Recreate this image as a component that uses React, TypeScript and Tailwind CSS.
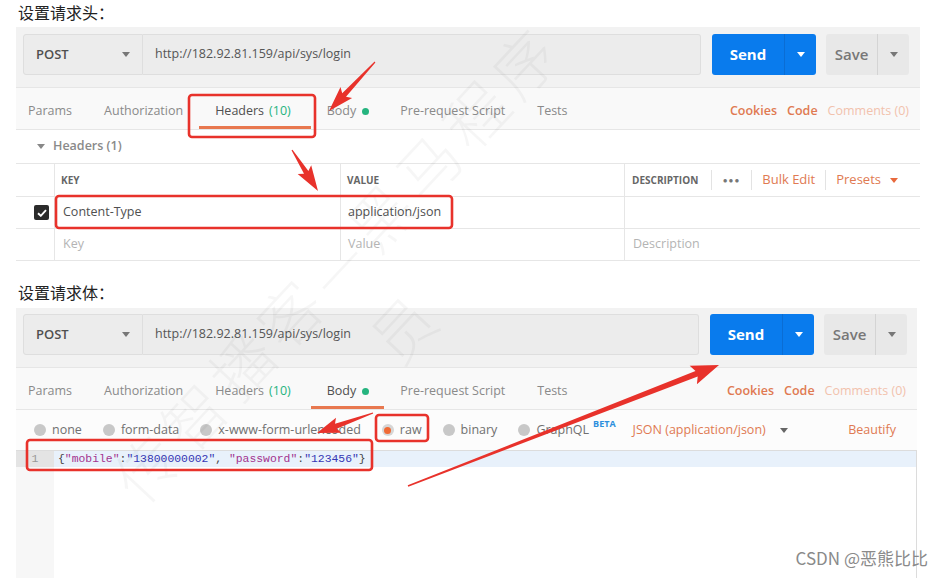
import React from 'react';

const RED = '#e8322b';

function Caret({ className = 'border-t-[#777]' }: { className?: string }) {
  return <span className={`inline-block h-0 w-0 border-x-[4px] border-t-[5px] border-x-transparent ${className}`} />;
}

function RequestBar() {
  return (
    <div className="flex h-[41px] items-stretch">
      <div className="flex w-[120px] items-center justify-between rounded-l-[3px] border border-[#dedede] bg-[#ececec] px-[12px]">
        <span className="text-[13px] font-semibold text-[#505050]">POST</span>
        <Caret />
      </div>
      <div className="flex flex-1 items-center rounded-r-[3px] border border-l-0 border-[#dedede] bg-[#ececec] pl-[12px] text-[12.5px] text-[#555]">
        http://182.92.81.159/api/sys/login
      </div>
      <div className="ml-[11px] flex w-[104px] rounded-[3px] bg-[#097bed]">
        <div className="flex w-[72px] items-center justify-center text-[15px] font-bold text-white">Send</div>
        <div className="flex flex-1 items-center justify-center border-l border-[#0a6dd4]">
          <Caret className="border-t-white" />
        </div>
      </div>
      <div className="ml-[10px] flex w-[83px] rounded-[3px] bg-[#e8e8e8]">
        <div className="flex w-[51px] items-center justify-center text-[15px] font-semibold text-[#777]">Save</div>
        <div className="flex flex-1 items-center justify-center border-l border-[#d4d4d4]">
          <Caret />
        </div>
      </div>
    </div>
  );
}

function Tabs({ active }: { active: 'headers' | 'body' }) {
  const tab = (on: boolean) =>
    `flex items-center px-[16px] border-b-[3px] pt-[8px] ${on ? 'border-[#e8784f] text-[#505050]' : 'border-transparent text-[#8a8a8a]'}`;
  return (
    <div className="flex h-[43px] items-stretch border-y border-[#e6e6e6] bg-[#f9f9f9] pr-[11px] text-[12.5px]">
      <div className={`${tab(false)} !pl-[12px]`}>Params</div>
      <div className={tab(false)}>Authorization</div>
      <div className={`${tab(active === 'headers')} !pr-[20px]`}>
        Headers<span className="ml-[5px] text-[#26b47f]">(10)</span>
      </div>
      <div className={`${tab(active === 'body')} !pr-[15px]`}>
        Body<span className="ml-[6px] inline-block h-[7px] w-[7px] rounded-full bg-[#26b47f]" />
      </div>
      <div className={tab(false)}>Pre-request Script</div>
      <div className={tab(false)}>Tests</div>
      <div className="ml-auto flex items-center gap-[10px] pt-[5px]">
        <span className="font-semibold text-[#e07a52]">Cookies</span>
        <span className="font-semibold text-[#e07a52]">Code</span>
        <span className="text-[#f2c2ad]">Comments (0)</span>
      </div>
    </div>
  );
}

function Radio({ label, on = false }: { label: string; on?: boolean }) {
  return (
    <div className="flex items-center gap-[6px]">
      {on ? (
        <span className="flex h-[12px] w-[12px] items-center justify-center rounded-full bg-[#d6d6d6]">
          <span className="h-[7px] w-[7px] rounded-full bg-[#f06a35]" />
        </span>
      ) : (
        <span className="h-[12px] w-[12px] rounded-full bg-[#c8c8c8]" />
      )}
      <span>{label}</span>
    </div>
  );
}

function arrow(x1: number, y1: number, x2: number, y2: number, head = 20, hw = 9, t0 = 0.6, t1 = 2.6) {
  const len = Math.hypot(x2 - x1, y2 - y1);
  const ux = (x2 - x1) / len;
  const uy = (y2 - y1) / len;
  const nx = -uy;
  const ny = ux;
  const bx = x2 - ux * head;
  const by = y2 - uy * head;
  const wx = x2 - ux * head * 1.15;
  const wy = y2 - uy * head * 1.15;
  const pts = [
    [x1 + nx * t0, y1 + ny * t0],
    [bx + nx * t1, by + ny * t1],
    [wx + nx * hw, wy + ny * hw],
    [x2, y2],
    [wx - nx * hw, wy - ny * hw],
    [bx - nx * t1, by - ny * t1],
    [x1 - nx * t0, y1 - ny * t0],
  ];
  return pts.map((p) => p.map((v) => v.toFixed(1)).join(',')).join(' ');
}

export default function App() {
  return (
    <div className="relative h-[578px] w-[944px] overflow-hidden bg-white font-['Open_Sans',sans-serif]">
      {/* 设置请求头 */}
      <div className="h-[27px] pl-[18px] font-['Noto_Sans_CJK_SC',sans-serif] text-[16px] leading-[25px] text-[#222]">设置请求头：</div>
      <div className="ml-[16px] w-[904px]">
        <div className="bg-[#f2f2f2] pt-[7px] pr-[11px] pb-[12px] pl-[7px]">
          <RequestBar />
        </div>
        <Tabs active="headers" />
        <div className="flex h-[33px] items-center pl-[21px] text-[12.5px] font-semibold text-[#8a8a8a]">
          <Caret className="border-t-[#888]" />
          <span className="ml-[8px]">Headers (1)</span>
        </div>
        <div className="grid grid-cols-[38px_286px_284px_1fr] border-t border-[#e6e6e6] text-[12.5px]">
          <div className="h-[33px] border-b border-[#e6e6e6]" />
          <div className="flex items-center border-b border-l border-[#e6e6e6] pl-[6px] text-[10px] font-bold text-[#666]">KEY</div>
          <div className="flex items-center border-b border-l border-[#e6e6e6] pl-[6px] text-[10px] font-bold text-[#666]">VALUE</div>
          <div className="flex items-center border-b border-l border-[#e6e6e6] pl-[7px]">
            <span className="text-[10px] font-bold text-[#666]">DESCRIPTION</span>
            <div className="ml-auto mr-[22px] flex h-[20px] items-center text-[13px]">
              <span className="h-full w-px bg-[#e3e3e3]" />
              <span className="px-[11px] text-[8px] tracking-[1px] text-[#777]">●●●</span>
              <span className="h-full w-px bg-[#e3e3e3]" />
              <span className="px-[10px] text-[#e07a52]">Bulk Edit</span>
              <span className="h-full w-px bg-[#e3e3e3]" />
              <span className="flex items-center gap-[9px] pl-[10px] text-[#e07a52]">
                Presets <Caret className="border-t-[#e8693c]" />
              </span>
            </div>
          </div>

          <div className="flex h-[32px] items-center border-b border-[#e6e6e6] pl-[18px]">
            <span className="flex h-[15px] w-[15px] items-center justify-center rounded-[2px] bg-[#2b2b2b]">
              <svg width="10" height="8" viewBox="0 0 10 8">
                <path d="M1 4.2 L3.8 6.8 L9 1.2" fill="none" stroke="white" strokeWidth="1.9" />
              </svg>
            </span>
          </div>
          <div className="flex items-center border-b border-l border-[#e6e6e6] pl-[8px] text-[#505050]">Content-Type</div>
          <div className="flex items-center border-b border-l border-[#e6e6e6] pl-[7px] text-[#505050]">application/json</div>
          <div className="border-b border-l border-[#e6e6e6]" />

          <div className="h-[32px] border-b border-[#e6e6e6]" />
          <div className="flex items-center border-b border-l border-[#e6e6e6] pl-[8px] text-[#b4b4b4]">Key</div>
          <div className="flex items-center border-b border-l border-[#e6e6e6] pl-[7px] text-[#b4b4b4]">Value</div>
          <div className="flex items-center border-b border-l border-[#e6e6e6] pl-[8px] text-[#b4b4b4]">Description</div>
        </div>
      </div>

      {/* 设置请求体 */}
      <div className="h-[47px] pl-[18px] pt-[19px] font-['Noto_Sans_CJK_SC',sans-serif] text-[16px] leading-[25px] text-[#222]">设置请求体：</div>
      <div className="ml-[16px] w-[901px]">
        <div className="bg-[#f2f2f2] pt-[6px] pr-[10px] pb-[12px] pl-[7px]">
          <RequestBar />
        </div>
        <Tabs active="body" />
        <div className="flex h-[40px] items-center gap-[21px] bg-[#fcfcfc] pr-[21px] pl-[18px] text-[12.5px] text-[#707070]">
          <Radio label="none" />
          <Radio label="form-data" />
          <Radio label="x-www-form-urlencoded" />
          <Radio label="raw" on />
          <Radio label="binary" />
          <div className="flex items-center">
            <Radio label="GraphQL" />
            <span className="mb-[12px] ml-[4px] text-[9px] font-bold text-[#2d8fdd]">BETA</span>
          </div>
          <div className="-ml-[4px] flex items-center gap-[14px] text-[#e07a52]">
            <span>JSON (application/json)</span>
            <Caret className="border-t-[#666]" />
          </div>
          <span className="ml-auto text-[#e07a52]">Beautify</span>
        </div>
        <div className="flex h-[130px] border-t border-r border-[#dcdcdc]">
          <div className="w-[38px] bg-[#f7f7f7]">
            <div className="h-[16px] bg-[#e4e4e4] text-center font-['Liberation_Mono',monospace] text-[11.5px] leading-[16px] text-[#999]">1</div>
          </div>
          <div className="flex-1">
            <div className="h-[16px] bg-[#e8f1fb] pl-[4px] font-['Liberation_Mono',monospace] text-[11.4px] leading-[16px] text-[#444]">
              {'{'}
              <span className="text-[#a3338f]">"mobile"</span>:<span className="text-[#3636b4]">"13800000002"</span>,{' '}
              <span className="text-[#a3338f]">"password"</span>:<span className="text-[#3636b4]">"123456"</span>
              {'}'}
            </div>
          </div>
        </div>
      </div>

      {/* watermark */}
      <div className="pointer-events-none absolute top-[200px] left-[50px] w-[640px] -rotate-[47deg] text-center font-['Noto_Sans_CJK_SC',sans-serif] text-[62px] font-light tracking-[8px] text-[rgba(0,0,0,0.035)]">
        传智播客—黑马程序员
      </div>

      <div className="absolute right-[16px] bottom-[8px] font-['Noto_Sans_CJK_SC',sans-serif] text-[17px] text-[#8a8a8a]">CSDN @恶熊比比</div>

      {/* annotations */}
      <svg className="pointer-events-none absolute inset-0" width="944" height="578">
        <g fill="none" stroke={RED} strokeWidth="2.6">
          <rect x="189" y="95" width="126" height="42" rx="3" />
          <rect x="56" y="196" width="396" height="32" rx="3" />
          <rect x="376" y="415" width="52" height="26" rx="3" />
          <rect x="27" y="440" width="345" height="30" rx="3" />
        </g>
        <g fill={RED}>
          <polygon points={arrow(375, 62, 329, 111, 22, 8)} />
          <polygon points={arrow(292, 150, 318, 191, 22, 8)} />
          <polygon points={arrow(408, 486, 719, 365, 24, 10, 0.8, 3)} />
          <polygon points={arrow(373, 413, 317, 433, 20, 8)} />
        </g>
      </svg>
    </div>
  );
}
